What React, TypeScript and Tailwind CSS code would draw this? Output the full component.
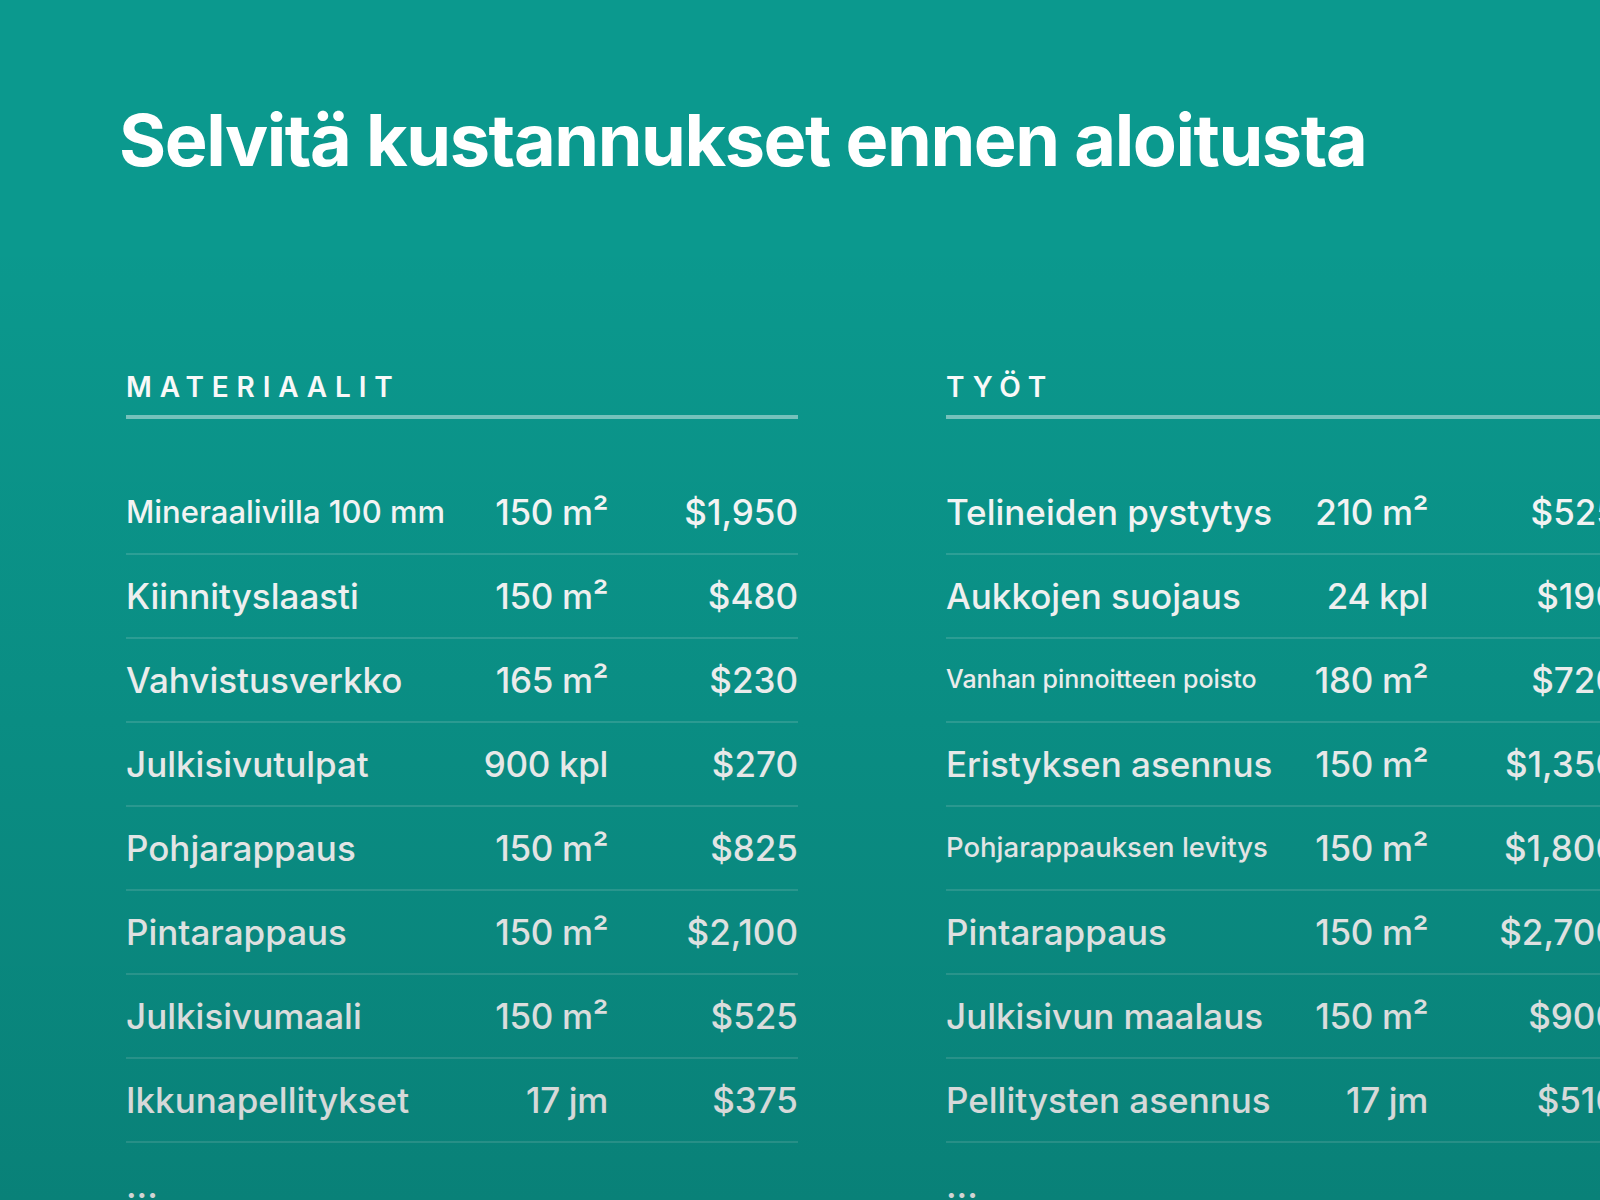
type Row = { name: string; qty: string; price: string; size?: string };

const materials: Row[] = [
  { name: 'Mineraalivilla 100 mm', qty: '150 m²', price: '$1,950', size: 'text-[31px]' },
  { name: 'Kiinnityslaasti', qty: '150 m²', price: '$480' },
  { name: 'Vahvistusverkko', qty: '165 m²', price: '$230' },
  { name: 'Julkisivutulpat', qty: '900 kpl', price: '$270' },
  { name: 'Pohjarappaus', qty: '150 m²', price: '$825' },
  { name: 'Pintarappaus', qty: '150 m²', price: '$2,100' },
  { name: 'Julkisivumaali', qty: '150 m²', price: '$525' },
  { name: 'Ikkunapellitykset', qty: '17 jm', price: '$375' },
];

const labour: Row[] = [
  { name: 'Telineiden pystytys', qty: '210 m²', price: '$525' },
  { name: 'Aukkojen suojaus', qty: '24 kpl', price: '$190' },
  { name: 'Vanhan pinnoitteen poisto', qty: '180 m²', price: '$720', size: 'text-[25px]' },
  { name: 'Eristyksen asennus', qty: '150 m²', price: '$1,350' },
  { name: 'Pohjarappauksen levitys', qty: '150 m²', price: '$1,800', size: 'text-[27.5px]' },
  { name: 'Pintarappaus', qty: '150 m²', price: '$2,700' },
  { name: 'Julkisivun maalaus', qty: '150 m²', price: '$900' },
  { name: 'Pellitysten asennus', qty: '17 jm', price: '$510' },
];

function CostTable({ title, rows }: { title: string; rows: Row[] }) {
  return (
    <div className="w-[672px] shrink-0">
      <div className="border-b-4 border-white/45 pb-[12px] text-[28px] font-semibold uppercase leading-[32px] tracking-[0.28em] text-white">
        {title}
      </div>
      <div className="mt-[52px]">
        {rows.map((r) => (
          <div
            key={r.name}
            className="grid h-[84px] grid-cols-[332px_150px_190px] items-center border-b-2 border-white/15 text-[35px] font-medium text-white"
          >
            <span className={`${r.size ?? 'text-[35px]'} whitespace-nowrap`}>{r.name}</span>
            <span className="text-right whitespace-nowrap tracking-[-0.01em]">{r.qty}</span>
            <span className="text-right whitespace-nowrap">{r.price}</span>
          </div>
        ))}
        <div className="flex h-[84px] items-center text-[35px] font-medium text-white">...</div>
      </div>
    </div>
  );
}

export default function App() {
  return (
    <div
      className="relative h-[1200px] w-[1600px] overflow-hidden bg-[#0b998e] text-white"
      style={{ fontFamily: 'Inter, "Noto Sans", sans-serif' }}
    >
      <div className="pl-[119px] pt-[96px]">
        <h1 className="text-[72px] font-bold leading-[88px] tracking-[-0.02em]">
          Selvitä kustannukset ennen aloitusta
        </h1>
      </div>
      <div className="mt-[187px] flex gap-[148px] pl-[126px]">
        <CostTable title="Materiaalit" rows={materials} />
        <CostTable title="Työt" rows={labour} />
      </div>
      <div className="pointer-events-none absolute inset-0 bg-[linear-gradient(to_bottom,rgba(0,20,20,0)_20%,rgba(0,20,20,0.18)_100%)]" />
    </div>
  );
}
